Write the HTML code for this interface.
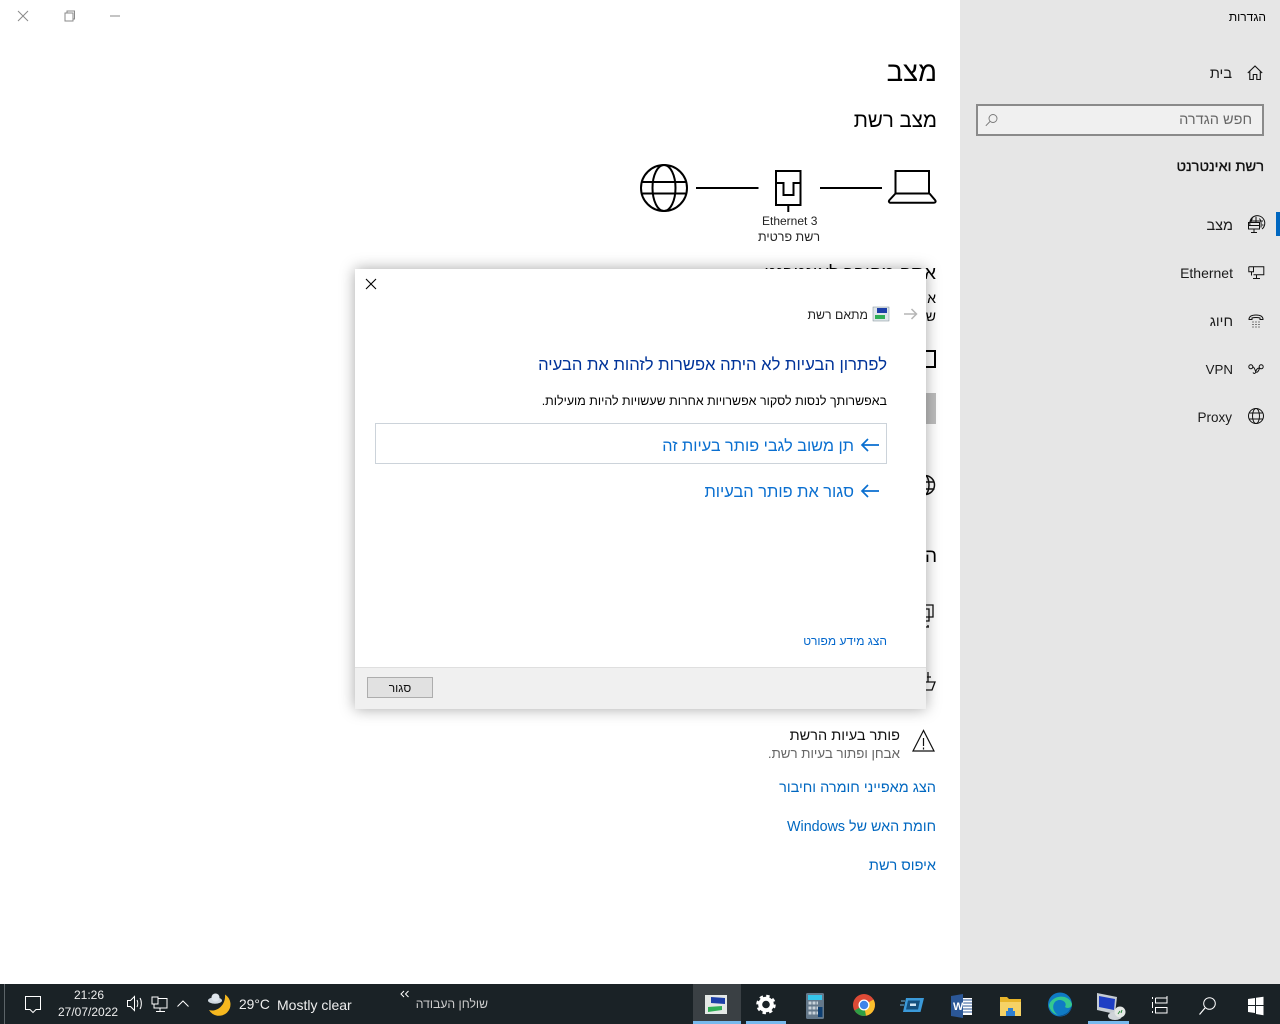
<!DOCTYPE html>
<html lang="he">
<head>
<meta charset="utf-8">
<title>הגדרות</title>
<style>
html,body{margin:0;padding:0;width:1280px;height:1024px;overflow:hidden;background:#fff;font-family:"Liberation Sans","DejaVu Sans",sans-serif;color:#000}
.t{position:absolute;white-space:nowrap;line-height:20px;direction:rtl}
.l{position:absolute;white-space:nowrap;line-height:20px;direction:ltr}
.b{position:absolute}
svg{position:absolute;overflow:visible}
.link{color:#0067c0;font-size:14.5px}
.nav{font-size:14.5px;color:#1a1a1a}
</style>
</head>
<body>
<div class="b" style="left:960px;top:0;width:320px;height:984px;background:#e6e6e6"></div>

<!-- window controls -->
<svg style="left:0;top:0" width="130" height="30" fill="none" stroke="#8a8a8a" stroke-width="1">
<path d="M18 11l10 10M28 11L18 21"/>
<path d="M65 13h8v8h-8zM67 13v-2h7.500v8H73"/>
<path d="M110 16h10"/>
</svg>

<!-- sidebar -->
<div class="t" style="right:14px;top:7px;font-size:12px">הגדרות</div>
<svg style="left:1247px;top:65px" width="16" height="16" fill="none" stroke="#111" stroke-width="1.100"><path d="M.8 8L8 1l7.200 7M2.800 6.500V14.500h3.500V9.500h3.500v5h3.500V6.500"/></svg>
<div class="t nav" style="right:48px;top:64px">בית</div>
<div class="b" style="left:976px;top:104px;width:284px;height:28px;border:2px solid #8a8a8a;background:#f0f0f0"></div>
<div class="t" style="right:28px;top:110px;font-size:14.500px;color:#666">חפש הגדרה</div>
<svg style="left:985px;top:113px" width="14" height="14" fill="none" stroke="#777" stroke-width=".9"><circle cx="8" cy="5.500" r="4"/><path d="M5 8.500L.8 12.800"/></svg>
<div class="t" style="right:16px;top:157px;font-size:14.600px;color:#111;-webkit-text-stroke:.35px #111">רשת ואינטרנט</div>

<div class="b" style="left:1276px;top:212px;width:4px;height:24px;background:#0067c0"></div>
<svg style="left:1248px;top:216px" width="16" height="18" fill="none" stroke="#111" stroke-width="1">
<path d="M2 9A7.500 7.500 0 1 1 14 13M8 .8V6M4.500 2.500C3.500 4 3 5 3 6M11.500 2.500c1.500 2 2 5 1.500 9M2.500 5H15M14 9h1.500"/>
<path d="M.5 6.500h11V13H.5zM6 13v3M3 16.500h6M.5 9.500h11"/></svg>
<div class="t nav" style="right:47px;top:216px">מצב</div>
<svg style="left:1248px;top:266px" width="16" height="14" fill="none" stroke="#111" stroke-width="1"><path d="M.8 .8h15v8H5.500M.8 .8V5.800h4.700V.8M3.500 5.800V9.500M8.500 8.800v3.500M5 12.500h7"/></svg>
<div class="t nav" style="right:47px;top:263px;font-size:14px">Ethernet</div>
<svg style="left:1248px;top:314px" width="16" height="14" fill="none" stroke="#111" stroke-width="1"><path d="M1 5.500C1 2 4.500 1 8 1s7 1 7 4.500h-3V4C10 3.300 6 3.300 4 4v1.500z"/><path d="M4.500 8h1M7.500 8h1M10.500 8h1M4.500 10.500h1M7.500 10.500h1M10.500 10.500h1M4.500 13h1M7.500 13h1M10.500 13h1"/></svg>
<div class="t nav" style="right:47px;top:312px">חיוג</div>
<svg style="left:1248px;top:364px" width="16" height="11" fill="none" stroke="#111" stroke-width="1"><circle cx="2.800" cy="2.800" r="2"/><circle cx="13.200" cy="2.800" r="2"/><path d="M4.800 2.800C7 3.500 7 7 8 8s3-1 3.500-4M11.500 4C9 4 8 6 7.500 8.500c-.5 1.500-2 1-2.500 0"/></svg>
<div class="t nav" style="right:47px;top:360px;font-size:13.300px">VPN</div>
<svg style="left:1248px;top:408px" width="16" height="16" fill="none" stroke="#111" stroke-width="1"><circle cx="8" cy="8" r="7.500"/><ellipse cx="8" cy="8" rx="3.500" ry="7.500"/><path d="M1.500 5h13M1.500 11h13"/></svg>
<div class="t" style="right:48px;top:408px;font-size:13.500px;color:#1a1a1a">Proxy</div>

<!-- main content -->
<div class="t" style="right:343px;top:54px;font-size:27.500px;line-height:36px">מצב</div>
<div class="t" style="right:343px;top:107px;font-size:20.500px;line-height:28px">מצב רשת</div>

<svg style="left:636px;top:160px" width="304" height="56" fill="none" stroke="#000" stroke-width="2">
<circle cx="28" cy="28" r="23"/>
<ellipse cx="28" cy="28" rx="11.500" ry="23"/>
<path d="M6 22h44M6 33.500h44"/>
<path d="M60 28h62.500M184 28h62"/>
<path d="M140 11h24.500v34h-24.500zM152.300 45v7M140 23h7.500v12h10v-12h7"/>
<path d="M259.500 11h33.500v22.500h-33.500zM259.500 33.500l-6 6.500c-1.200 1.500-.5 2.800 1.500 2.800h42.500c2 0 2.700-1.300 1.500-2.800l-5.500-6.500"/>
</svg>
<div class="l" style="left:762px;top:211px;font-size:12px;color:#222">Ethernet 3</div>
<div class="t" style="right:460px;top:227px;font-size:12.500px;color:#222">רשת פרטית</div>

<div class="t" style="right:344px;top:260px;font-size:18.500px;line-height:26px">אתה מחובר לאינטרנט</div>
<div class="t" style="right:344px;top:288px;font-size:14px">א</div>
<div class="t" style="right:344px;top:306px;font-size:14px">ש</div>
<div class="b" style="left:900px;top:350px;width:32px;height:14px;border:2px solid #000"></div>
<div class="b" style="left:900px;top:393px;width:36px;height:31px;background:#bdbdbd"></div>
<svg style="left:900px;top:474px" width="36" height="24" fill="none" stroke="#111" stroke-width="1.500"><circle cx="25" cy="11" r="9.500"/><ellipse cx="25" cy="11" rx="4" ry="9.500"/><path d="M15.500 8h19M15.500 15h19"/></svg>
<div class="t" style="right:343px;top:547px;font-size:19px">ה</div>
<svg style="left:900px;top:604px" width="36" height="26" fill="none" stroke="#111" stroke-width="1.300"><path d="M24 1h9v12H24M20 5h9v12h-9M28 21v2M24 23h5"/></svg>
<svg style="left:900px;top:670px" width="36" height="26" fill="none" stroke="#111" stroke-width="1.300"><path d="M28 2v10h-3M24 12h11l-3 8H24M27 7h4"/></svg>

<svg style="left:912px;top:729px" width="24" height="24" fill="none" stroke="#111" stroke-width="1.200"><path d="M11.500 1.500L1 22h21zM11.500 9v8M11.500 18.500v2"/></svg>
<div class="t" style="right:380px;top:726px;font-size:14.500px;color:#111">פותר בעיות הרשת</div>
<div class="t" style="right:380px;top:744px;font-size:13.300px;color:#666">אבחן ופתור בעיות רשת.</div>
<div class="t link" style="right:344px;top:778px">הצג מאפייני חומרה וחיבור</div>
<div class="t link" style="right:344px;top:817px;font-size:14.300px">חומת האש של Windows</div>
<div class="t link" style="right:344px;top:856px">איפוס רשת</div>

<!-- dialog -->
<div class="b" style="left:355px;top:269px;width:571px;height:440px;background:#fff;box-shadow:0 0 14px rgba(0,0,0,.35)"></div>
<div class="b" style="left:355px;top:667px;width:571px;height:42px;background:#f0f0f0;border-top:1px solid #dfdfdf;box-sizing:border-box"></div>
<svg style="left:365px;top:278px" width="12" height="12" fill="none" stroke="#000" stroke-width="1.100"><path d="M1 1l10 10M11 1L1 11"/></svg>
<svg style="left:904px;top:308px" width="14" height="12" fill="none" stroke="#b5b5b5" stroke-width="1.500"><path d="M0 6h12.500M7.500 1l5 5-5 5"/></svg>
<svg style="left:873px;top:307px" width="16" height="14"><rect width="16" height="14" fill="#dfe6ea" stroke="#7d8a92" stroke-width=".5"/><rect x="4" y="1" width="10" height="5" fill="#1d3fa8"/><rect x="2" y="8" width="10" height="4" fill="#2fae55"/></svg>
<div class="t" style="right:412px;top:305px;font-size:12.300px;color:#222">מתאם רשת</div>
<div class="t" style="right:393px;top:355px;font-size:16.600px;color:#003399">לפתרון הבעיות לא היתה אפשרות לזהות את הבעיה</div>
<div class="t" style="right:393px;top:391px;font-size:12.450px;color:#000">באפשרותך לנסות לסקור אפשרויות אחרות שעשויות להיות מועילות.</div>
<div class="b" style="left:375px;top:423px;width:510px;height:39px;border:1px solid #ccd3da"></div>
<svg style="left:861px;top:438px" width="18" height="14" fill="none" stroke="#0a6fd0" stroke-width="1.700"><path d="M18 7H1M7 1L1 7l6 6"/></svg>
<div class="t" style="right:426px;top:436px;font-size:16.250px;color:#0a6fd0">תן משוב לגבי פותר בעיות זה</div>
<svg style="left:861px;top:484px" width="18" height="14" fill="none" stroke="#0a6fd0" stroke-width="1.700"><path d="M18 7H1M7 1L1 7l6 6"/></svg>
<div class="t" style="right:426px;top:482px;font-size:16.400px;color:#0a6fd0">סגור את פותר הבעיות</div>
<div class="t" style="right:393px;top:631px;font-size:12px;color:#0066cc">הצג מידע מפורט</div>
<div class="b" style="left:367px;top:677px;width:64px;height:19px;background:#e1e1e1;border:1px solid #adadad"></div>
<div class="t" style="left:367px;width:66px;top:678px;font-size:12px;text-align:center;color:#111">סגור</div>

<!-- taskbar -->
<div class="b" style="left:0;top:984px;width:1280px;height:40px;background:#1a2226"></div>
<div class="b" style="left:4px;top:984px;width:1px;height:40px;background:#5c6468"></div>
<svg style="left:0;top:984px" width="200" height="40" fill="none" stroke="#fff" stroke-width="1">
<path d="M25.500 12.500h15v13h-4.500l-3 3-3-3h-4.500z"/>
<path d="M127.500 16.500h3l4-4v14l-4-4h-3zM137 16c1 2 1 5 0 7M140 14c1.800 3 1.800 8 0 11"/>
<path d="M152 13h6v7h-6zM158 14.500h9v9.500h-13v-4M160 24v3M156 27.500h9"/>
<path d="M177.500 22.500l5.500-5.500 5.500 5.500"/>
</svg>
<div class="l" style="left:74px;top:985px;font-size:12px;color:#eee">21:26</div>
<div class="l" style="left:58px;top:1002px;font-size:12px;color:#eee">27/07/2022</div>
<svg style="left:207px;top:992px" width="26" height="24">
<path d="M18 2.500A11.500 11.500 0 1 1 2 18c8 2.500 17-5 16-15.500z" fill="#f6b81f"/>
<ellipse cx="8" cy="8.500" rx="7" ry="3.200" fill="#cfd8e0"/><circle cx="8.500" cy="5.500" r="4" fill="#dfe6ec"/>
</svg>
<div class="l" style="left:239px;top:995px;font-size:13.800px;color:#eee">29°C</div>
<div class="l" style="left:277px;top:995px;font-size:14px;color:#eee">Mostly clear</div>
<svg style="left:400px;top:990px" width="10" height="8" fill="none" stroke="#fff" stroke-width="1"><path d="M4 1L1 4l3 3M8.500 1l-3 3 3 3"/></svg>
<div class="t" style="right:792px;top:994px;font-size:12.200px;color:#ccc">שולחן העבודה</div>

<div class="b" style="left:693px;top:984px;width:48px;height:40px;background:#3a4044"></div>
<div class="b" style="left:693px;top:1021px;width:48px;height:3px;background:#76b9ed"></div>
<div class="b" style="left:746px;top:1021px;width:40px;height:3px;background:#76b9ed"></div>
<div class="b" style="left:1088px;top:1021px;width:41px;height:3px;background:#76b9ed"></div>

<svg style="left:690px;top:984px" width="590" height="40" fill="none">
<!-- network adapter -->
<rect x="15" y="11" width="22" height="19" fill="#e4e8e6"/><path d="M21 13l14 1v6l-14-1z" fill="#1d3fa8"/><path d="M18 23l14-1v4l-14 2z" fill="#2fae55"/>
<!-- gear -->
<circle cx="76" cy="20.500" r="5.800" stroke="#fff" stroke-width="4"/>
<circle cx="76" cy="20.500" r="8.500" stroke="#fff" stroke-width="2.500" stroke-dasharray="3.400 3.270"/>
<!-- calculator -->
<rect x="116" y="9" width="18" height="26" rx="1.500" fill="#64788a"/><rect x="118" y="11" width="14" height="5" fill="#35c5ea"/>
<path d="M118.500 19h9.500M118.500 24h9.500M118.500 29h9.500" stroke="#c8d2da" stroke-width="3" stroke-dasharray="3 1"/>
<rect x="128" y="23" width="4.500" height="10" fill="#0e3f72"/>
<!-- chrome -->
<circle cx="174" cy="21" r="11" fill="#dd4a36"/>
<path d="M174 21L164.500 26.500A11 11 0 0 0 176 31.800z" fill="#2f9e44"/>
<path d="M174 21l2 10.800A11 11 0 0 0 183.500 15.500z" fill="#fbc02d"/>
<circle cx="174" cy="21" r="5.500" fill="#fff"/><circle cx="174" cy="21" r="4.200" fill="#3f84ea"/>
<!-- remote -->
<path d="M216 14h18l-3.500 14h-17.500z" fill="#3b9ad9"/><path d="M218 16.500h12l-2 9h-12z" fill="#14507e"/><rect x="220" y="19.500" width="6" height="2.500" fill="#cfe6f5"/>
<path d="M211 17h4M210 21h4" stroke="#6fb5e0" stroke-width="1"/>
<!-- word -->
<rect x="270" y="14" width="12" height="17" fill="#fff"/><path d="M273 16h9M273 19h9M273 22h9M273 25h9M273 28h9" stroke="#2b5797"/>
<path d="M261 12l12-2v24l-12-2z" fill="#2b5797"/>
<text x="263" y="26" font-family="Liberation Sans" font-size="11" font-weight="bold" fill="#fff">W</text>
<!-- explorer -->
<path d="M310 13h7l2 2h12v17h-21z" fill="#e8b52a"/><rect x="310" y="18" width="21" height="14" fill="#f6d265"/><path d="M316 32v-5h9v5" fill="#2f7fd0"/><rect x="318" y="24" width="5" height="3" fill="#2f7fd0"/>
<!-- edge -->
<circle cx="370" cy="20.500" r="12" fill="#0f7ac4"/>
<path d="M359 22C360 12 378 8 382 20c0 4-5 5-7 3 3-5-4-9-9-6-4 3-4 10 2 14-5-1-8-5-9-9z" fill="#35c78f"/>
<path d="M382 22c-2 7-8 11-14 10 3 0 9-2 11-5z" fill="#0a3f78"/>
<!-- monitor -->
<path d="M407 9l20 4-2 17-18-4z" fill="#c6ccd2"/><path d="M409 12l16 3-1 11-15-3z" fill="#1f3fc4"/>
<ellipse cx="425" cy="32" rx="7" ry="4" fill="#cfd4d8"/><circle cx="430" cy="28" r="5.500" fill="#e5e8e5"/><path d="M428 30l2-3M431 29l1-3" stroke="#2a8a3c"/>
<g stroke="#fff" stroke-width="1">
<!-- task view -->
<path d="M462.500 13v2M462.500 18v6M462.500 27v2M465.500 14h11.500v-2M465.500 14v5h11.500v-5M465.500 23.500h11.500v5.500h-11.500zM465.500 14h11.500"/>
<!-- search -->
<circle cx="519.500" cy="19.500" r="5.800"/><path d="M515 24l-5.500 6.500" stroke-width="1.200"/>
</g>
<!-- windows -->
<path d="M558 15l7-1v7h-7zM566 13.800l7.500-1.100V21H566zM558 22h7v7l-7-1zM566 22h7.500v9.300L566 30z" fill="#fff"/>
</svg>
</body>
</html>
